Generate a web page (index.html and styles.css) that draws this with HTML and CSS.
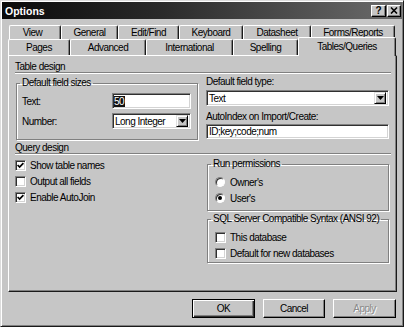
FILE: index.html
```html
<!DOCTYPE html>
<html>
<head>
<meta charset="utf-8">
<link rel="stylesheet" href="styles.css">
</head>
<body>
<div class="window">
  <div class="titlebar">
    <span class="title">Options</span>
    <div class="tb-buttons">
      <span class="tb-btn help">?</span>
      <span class="tb-btn close"><svg width="8" height="7" viewBox="0 0 8 7"><path d="M1 0.5L7 6.5M7 0.5L1 6.5" stroke="#000" stroke-width="1.6"/></svg></span>
    </div>
  </div>

  <div class="tabs">
    <div class="tabrow back">
      <div class="tab t-view">View</div>
      <div class="tab t-general">General</div>
      <div class="tab t-edit">Edit/Find</div>
      <div class="tab t-keyboard">Keyboard</div>
      <div class="tab t-datasheet">Datasheet</div>
      <div class="tab t-forms">Forms/Reports</div>
    </div>
    <div class="tabrow front">
      <div class="tab t-pages">Pages</div>
      <div class="tab t-advanced">Advanced</div>
      <div class="tab t-intl">International</div>
      <div class="tab t-spelling">Spelling</div>
      <div class="tab t-tables sel">Tables/Queries</div>
    </div>
  </div>

  <div class="panel">
    <div class="section-head">Table design</div>
    <div class="cols">
      <fieldset class="group sizes">
        <legend>Default field sizes</legend>
        <div class="field-row">
          <span class="lbl">Text:</span>
          <span class="input short"><span class="seltext">50</span></span>
        </div>
        <div class="field-row second">
          <span class="lbl">Number:</span>
          <span class="select short"><span class="val">Long Integer</span><span class="drop"><svg width="7" height="4" viewBox="0 0 7 4"><path d="M0 0H7L3.5 4Z" fill="#000"/></svg></span></span>
        </div>
      </fieldset>
      <div class="rightcol">
        <div class="lbl2">Default field type:</div>
        <div class="select wide"><span class="val">Text</span><span class="drop"><svg width="7" height="4" viewBox="0 0 7 4"><path d="M0 0H7L3.5 4Z" fill="#000"/></svg></span></div>
        <div class="lbl2 second">AutoIndex on Import/Create:</div>
        <div class="input wide">ID;key;code;num</div>
      </div>
    </div>

    <div class="section-head query">Query design</div>
    <div class="cols">
      <div class="checks">
        <div class="check-row"><span class="cb"><svg width="7" height="7" viewBox="0 0 7 7"><path d="M0.6 3L2.6 5L6.4 1.2" fill="none" stroke="#000" stroke-width="1.7"/></svg></span><span>Show table names</span></div>
        <div class="check-row"><span class="cb"></span><span>Output all fields</span></div>
        <div class="check-row"><span class="cb"><svg width="7" height="7" viewBox="0 0 7 7"><path d="M0.6 3L2.6 5L6.4 1.2" fill="none" stroke="#000" stroke-width="1.7"/></svg></span><span>Enable AutoJoin</span></div>
      </div>
      <div class="rightcol">
        <fieldset class="group perms">
          <legend>Run permissions</legend>
          <div class="check-row"><span class="radio"></span><span>Owner's</span></div>
          <div class="check-row"><span class="radio"><span class="dot"></span></span><span>User's</span></div>
        </fieldset>
        <fieldset class="group sql">
          <legend>SQL Server Compatible Syntax (ANSI 92)</legend>
          <div class="check-row"><span class="cb"></span><span>This database</span></div>
          <div class="check-row"><span class="cb"></span><span>Default for new databases</span></div>
        </fieldset>
      </div>
    </div>
  </div>

  <div class="buttons">
    <div class="btn default b-ok">OK</div>
    <div class="btn b-cancel">Cancel</div>
    <div class="btn disabled b-apply">Apply</div>
  </div>
</div>
</body>
</html>
```

FILE: styles.css
```css
* { box-sizing: border-box; }

body {
  margin: 0;
  font-family: "Liberation Sans", Arial, sans-serif;
  font-size: 10px;
  letter-spacing: -0.5px;
  color: #000;
  background: #c6c6c6;
}

.window {
  width: 404px;
  height: 327px;
  background: #c6c6c6;
  border: 1px solid;
  border-color: #dcdcdc #1a1a1a #1a1a1a #dcdcdc;
  box-shadow: inset 1px 1px #fff, inset -1px -1px #808080;
  padding: 1px;
  display: flex;
  flex-direction: column;
}

.titlebar {
  height: 17px;
  flex: none;
  display: flex;
  align-items: center;
  justify-content: space-between;
  padding: 0 1px 0 3px;
  background: linear-gradient(to right, #0a0a0a 0%, #2a2a2a 40%, #6c6c6c 100%);
}

.title {
  color: #fff;
  font-weight: bold;
  font-size: 10.5px;
  letter-spacing: 0;
}

.tb-buttons {
  display: flex;
  gap: 1px;
}

.tb-btn {
  height: 12px;
  display: flex;
  align-items: center;
  justify-content: center;
  background: #c6c6c6;
  border: 1px solid;
  border-color: #fff #000 #000 #fff;
  box-shadow: inset -1px -1px #808080;
  font-weight: bold;
  font-size: 10px;
  letter-spacing: 0;
  line-height: 10px;
}

.tb-btn.help { width: 15px; }
.tb-btn.close { width: 14px; }

/* Tabs */
.tabs {
  margin: 6px 0 0 6px;
  position: relative;
  z-index: 1;
}

.tabrow {
  display: flex;
  align-items: flex-end;
}

.tabrow.back {
  padding-left: 1px;
  height: 14px;
}

.tabrow.front {
  height: 16px;
}

.tab {
  height: 100%;
  display: flex;
  align-items: center;
  justify-content: center;
  background: #c6c6c6;
  border-top: 1px solid #fff;
  border-left: 1px solid #fff;
  border-right: 1px solid #1a1a1a;
  box-shadow: inset -1px 0 #808080;
  border-radius: 2px 2px 0 0;
  white-space: nowrap;
}

.tab.sel {
  height: 19px;
  margin-top: -2px;
  margin-bottom: -1px;
  padding-bottom: 2px;
}

.t-view { width: 52px; padding-right: 5px; }
.t-general { width: 57px; }
.t-edit { width: 61px; }
.t-keyboard { width: 64px; }
.t-datasheet { width: 68px; }
.t-forms { width: 84px; }

.t-pages { width: 62px; }
.t-advanced { width: 76px; }
.t-intl { width: 87px; }
.t-spelling { width: 65px; }
.t-tables { width: 98px; }

/* Panel */
.panel {
  margin-left: 6px;
  width: 389px;
  height: 237px;
  flex: none;
  border: 1px solid;
  border-color: #fff #1a1a1a #1a1a1a #fff;
  box-shadow: inset -1px -1px #808080;
  padding: 5px 5px 0 6px;
}

.section-head {
  height: 12px;
  line-height: 11px;
  border-bottom: 1px solid #808080;
  box-shadow: 0 1px #fff;
}

.section-head.query {
  margin-top: 2px;
}

.cols {
  display: grid;
  grid-template-columns: 183px 183px;
  column-gap: 8px;
  align-items: start;
}

.group {
  margin: 0;
  min-width: 0;
  border: 1px solid #808080;
  box-shadow: 1px 1px #fff, inset 1px 1px #fff;
}

.group legend {
  padding: 0 2px;
  line-height: 12px;
  height: 12px;
  white-space: nowrap;
}

.sizes {
  margin: 4px 0 0 1px;
  padding: 4px 5px 10px 5px;
}

.sizes legend { margin-left: -2px; }

.field-row {
  display: flex;
  align-items: center;
  height: 16px;
}

.field-row.second { margin-top: 4px; }

.lbl {
  width: 90px;
  flex: none;
}

.input, .select {
  display: flex;
  align-items: center;
  background: #fff;
  border: 1px solid;
  border-color: #808080 #fff #fff #808080;
  box-shadow: inset 1px 1px #303030, inset -1px -1px #d4d4d4;
  padding-left: 2px;
  white-space: nowrap;
}

.input { height: 16px; }
.select { height: 16px; padding-right: 2px; }

.short { width: 79px; }
.wide { width: 183px; }

.input.wide { height: 15px; margin-top: 1px; }

.seltext {
  background: #111;
  color: #fff;
  line-height: 11px;
  padding: 0 1px 0 0;
  margin-left: -1px;
}

.val { flex: 1; }

.drop {
  width: 12px;
  height: 12px;
  flex: none;
  display: flex;
  align-items: center;
  justify-content: center;
  background: #c6c6c6;
  border: 1px solid;
  border-color: #e0e0e0 #000 #000 #e0e0e0;
  box-shadow: inset 1px 1px #fff, inset -1px -1px #808080;
}

.rightcol { min-width: 0; }

.lbl2 {
  margin-top: 3px;
  line-height: 12px;
  height: 12px;
}

.lbl2.second { margin-top: 5px; }

.cols > .rightcol > .select { margin-top: 2px; }

/* Checks */
.checks { padding-top: 3px; }

.check-row {
  display: flex;
  align-items: center;
  height: 16px;
  gap: 4px;
  white-space: nowrap;
}

.cb {
  width: 11px;
  height: 11px;
  flex: none;
  display: flex;
  align-items: center;
  justify-content: center;
  background: #fff;
  border: 1px solid;
  border-color: #808080 #fff #fff #808080;
  box-shadow: inset 1px 1px #303030, inset -1px -1px #d4d4d4;
}

.radio {
  width: 10px;
  height: 10px;
  flex: none;
  border-radius: 50%;
  display: flex;
  align-items: center;
  justify-content: center;
  background: #fff;
  border: 1px solid;
  border-color: #808080 #fff #fff #808080;
  box-shadow: inset 1px 1px #303030;
}

.dot {
  width: 4px;
  height: 4px;
  border-radius: 50%;
  background: #000;
}

.perms {
  margin: 4px 0 0 1px;
  padding: 4px 7px 4px 7px;
}

.perms legend, .sql legend { margin-left: -4px; }

.perms .check-row { gap: 5px; }

.sql {
  margin: 2px 0 0 1px;
  padding: 4px 7px 1px 7px;
}

/* Buttons */
.buttons {
  display: flex;
  justify-content: flex-end;
  gap: 8px;
  margin-top: 7px;
  padding-right: 6px;
}

.btn {
  height: 19px;
  display: flex;
  align-items: center;
  justify-content: center;
  border: 1px solid;
  border-color: #fff #000 #000 #fff;
  box-shadow: inset -1px -1px #808080;
}

.btn.default {
  border: 1px solid #000;
  box-shadow: inset 1px 1px #fff, inset -1px -1px #303030, inset -2px -2px #808080;
}

.btn.disabled {
  color: #8a8a8a;
  text-shadow: 1px 1px #fff;
}

.b-ok { width: 63px; }
.b-cancel { width: 62px; }
.b-apply { width: 63px; }
```
